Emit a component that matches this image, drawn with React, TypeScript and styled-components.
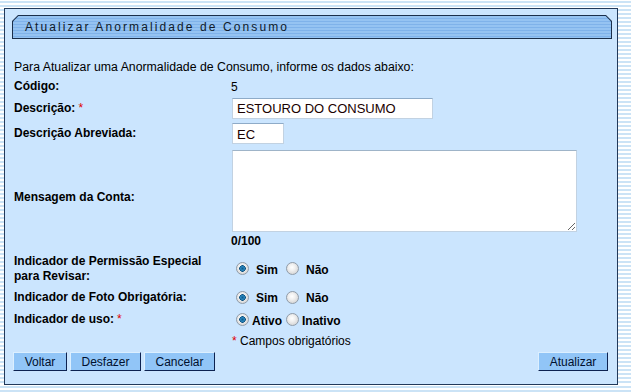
import React from 'react'
import styled, { createGlobalStyle } from 'styled-components'

const GlobalStyle = createGlobalStyle`
  body {
    margin: 0;
    font-family: "Liberation Sans", Arial, sans-serif;
    font-size: 12px;
    color: #000;
    background: repeating-linear-gradient(to bottom, #ffffff 0 1px, #cbe3f6 1px 3px, #ffffff 3px 4px);
  }
`

const Panel = styled.div`
  box-sizing: border-box;
  width: 614px;
  height: 377px;
  margin: 8px 0 0 4px;
  padding-top: 6px;
  border: 1px solid #22395a;
  background: #cbe5fe;
`

const TitleFrame = styled.div`
  margin: 0 5px 0 7px;
  padding: 1px;
  height: 24px;
  box-sizing: border-box;
  background: #1b2f4b;
  clip-path: polygon(6px 0, calc(100% - 6px) 0, 100% 6px, 100% 100%, 0 100%, 0 6px);
`

const TitleBar = styled.div`
  height: 100%;
  padding-left: 12px;
  display: flex;
  align-items: center;
  font-size: 12px;
  letter-spacing: 2.1px;
  color: #0f1a2a;
  background: repeating-linear-gradient(to bottom, #95c3f2 0 2px, #7fb2ea 2px 3px);
  clip-path: polygon(5.4px 0, calc(100% - 5.4px) 0, 100% 5.4px, 100% 100%, 0 100%, 0 5.4px);
`

const Form = styled.table`
  margin: 18px 0 0 9px;
  border-collapse: collapse;
  width: 592px;
`

const Row = styled.tr<{ $h: number }>`
  height: ${({ $h }) => $h}px;
`

const Label = styled.td`
  width: 217px;
  padding: 0;
  vertical-align: middle;
  font-weight: bold;
  line-height: 15px;
`

const Value = styled.td<{ $bold?: boolean }>`
  padding: 0;
  vertical-align: middle;
  font-weight: ${({ $bold }) => ($bold ? 'bold' : 'normal')};
  line-height: 14px;
`

const Intro = styled.td`
  padding: 0;
  vertical-align: middle;
  font-size: 12.3px;
`

const Star = styled.span`
  color: #e00000;
  font-weight: normal;
  margin-left: 3px;
`

const TextInput = styled.input<{ $w: number }>`
  box-sizing: border-box;
  width: ${({ $w }) => $w}px;
  height: 21px;
  margin: 0 0 0 1px;
  padding: 1px 4px 0;
  border: 1px solid #c2d2e2;
  border-top-color: #8eabc8;
  background: #fff;
  font-family: "Liberation Sans", Arial, sans-serif;
  font-size: 13px;
  color: #1a0000;
  outline: none;
  display: block;
`

const TextArea = styled.textarea`
  box-sizing: border-box;
  display: block;
  width: 345px;
  height: 82px;
  margin: 0 0 0 1px;
  border: 1px solid #c2d2e2;
  border-top-color: #9fb4c8;
  background: #fff;
  resize: both;
  outline: none;
`

const RadioGroup = styled.div`
  display: flex;
  align-items: center;
  font-weight: bold;
`

const Radio = styled.input`
  appearance: none;
  box-sizing: border-box;
  width: 13px;
  height: 13px;
  margin: 0 0 0 5px;
  border: 1px solid #8f9caa;
  border-radius: 50%;
  background: radial-gradient(circle at 45% 40%, #ffffff 0, #f0f0f0 35%, #c9c9c9 100%);

  &:checked {
    background:
      radial-gradient(circle at 50% 50%, #0f5d8f 0, #2a86bd 2px, #0b4f7e 3px, transparent 3.5px),
      radial-gradient(circle at 45% 40%, #ffffff 0, #f0f0f0 35%, #c9c9c9 100%);
  }
`

const RadioText = styled.span<{ $pad: number }>`
  margin-left: ${({ $pad }) => $pad}px;
  padding-top: 2px;
`

const Note = styled.span`
  font-weight: normal;
`

const Buttons = styled.div`
  display: flex;
  gap: 3px;
  margin: 4px 9px 0 8px;
`

const Spacer = styled.div`
  flex: 1;
`

const Button = styled.button<{ $w: number }>`
  box-sizing: border-box;
  width: ${({ $w }) => $w}px;
  height: 19px;
  padding: 0;
  border: 1px solid;
  border-color: #dcefff #0d2250 #0d2250 #dcefff;
  background: #91c5f7;
  font-family: "Liberation Sans", Arial, sans-serif;
  font-size: 12px;
  color: #00102e;
  cursor: pointer;
`

const Choice = ({ name, options, pad, gap }: { name: string; options: string[]; pad: number; gap: number }) => (
  <RadioGroup>
    {options.map((opt, i) => (
      <React.Fragment key={opt}>
        <Radio type="radio" name={name} defaultChecked={i === 0} style={i > 0 ? { marginLeft: gap } : undefined} />
        <RadioText $pad={pad}>{opt}</RadioText>
      </React.Fragment>
    ))}
  </RadioGroup>
)

const App = () => {
  return (
    <>
      <GlobalStyle />
      <Panel>
        <TitleFrame>
          <TitleBar>Atualizar Anormalidade de Consumo</TitleBar>
        </TitleFrame>
        <Form>
          <tbody>
            <Row $h={20}>
              <Intro colSpan={2}>Para Atualizar uma Anormalidade de Consumo, informe os dados abaixo:</Intro>
            </Row>
            <Row $h={19}>
              <Label>Código:</Label>
              <Value>5</Value>
            </Row>
            <Row $h={24}>
              <Label>
                Descrição:<Star>*</Star>
              </Label>
              <Value>
                <TextInput $w={201} defaultValue="ESTOURO DO CONSUMO" />
              </Value>
            </Row>
            <Row $h={27}>
              <Label>Descrição Abreviada:</Label>
              <Value>
                <TextInput $w={52} defaultValue="EC" />
              </Value>
            </Row>
            <Row $h={87}>
              <Label rowSpan={2}>Mensagem da Conta:</Label>
              <Value>
                <TextArea />
              </Value>
            </Row>
            <Row $h={14}>
              <Value $bold>0/100</Value>
            </Row>
            <Row $h={41}>
              <Label>
                Indicador de Permissão Especial
                <br />
                para Revisar:
              </Label>
              <Value>
                <Choice name="revisar" options={['Sim', 'Não']} pad={7} gap={8} />
              </Value>
            </Row>
            <Row $h={16}>
              <Label>Indicador de Foto Obrigatória:</Label>
              <Value>
                <Choice name="foto" options={['Sim', 'Não']} pad={7} gap={8} />
              </Value>
            </Row>
            <Row $h={29}>
              <Label>
                Indicador de uso:<Star>*</Star>
              </Label>
              <Value>
                <Choice name="uso" options={['Ativo', 'Inativo']} pad={3} gap={4} />
              </Value>
            </Row>
            <Row $h={14}>
              <Label />
              <Value>
                <Star style={{ marginLeft: 1 }}>*</Star> <Note>Campos obrigatórios</Note>
              </Value>
            </Row>
          </tbody>
        </Form>
        <Buttons>
          <Button $w={54}>Voltar</Button>
          <Button $w={71}>Desfazer</Button>
          <Button $w={71}>Cancelar</Button>
          <Spacer />
          <Button $w={70}>Atualizar</Button>
        </Buttons>
      </Panel>
    </>
  )
}

export default App
